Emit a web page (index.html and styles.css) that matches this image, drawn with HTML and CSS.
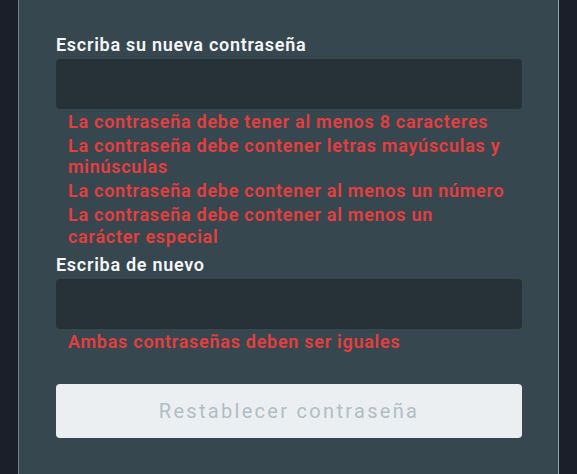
FILE: index.html
```html
<!DOCTYPE html>
<html lang="es">
<head>
<meta charset="utf-8">
<title>Restablecer contraseña</title>
<link rel="stylesheet" href="styles.css">
</head>
<body>
<div class="page">
  <form class="card">
    <div class="field">
      <label class="label" for="pw1">Escriba su nueva contraseña</label>
      <input class="input" id="pw1" type="password">
      <ul class="errors">
        <li>La contraseña debe tener al menos 8 caracteres</li>
        <li>La contraseña debe contener letras mayúsculas y minúsculas</li>
        <li>La contraseña debe contener al menos un número</li>
        <li>La contraseña debe contener al menos un carácter especial</li>
      </ul>
    </div>
    <div class="field second">
      <label class="label" for="pw2">Escriba de nuevo</label>
      <input class="input" id="pw2" type="password">
      <ul class="errors">
        <li>Ambas contraseñas deben ser iguales</li>
      </ul>
    </div>
    <button class="submit" type="button" disabled>Restablecer contraseña</button>
  </form>
</div>
</body>
</html>
```
FILE: styles.css
```css
* { box-sizing: border-box; }
html, body {
  margin: 0;
  padding: 0;
  height: 100%;
  background: #1b1f29;
  font-family: Roboto, "Liberation Sans", sans-serif;
  overflow: hidden;
}
.page {
  padding: 0 18px;
  height: 100%;
}
.card {
  background: #37474f;
  border-left: 1px solid #6d8290;
  border-right: 1px solid #8ea3b2;
  min-height: 100%;
  padding: 34px 36px 40px 37px;
  display: flex;
  flex-direction: column;
}
.field {
  display: flex;
  flex-direction: column;
}
.field.second {
  margin-top: 7.5px;
}
.label {
  color: #f5f7f8;
  font-size: 18px;
  font-weight: 600;
  letter-spacing: 0.72px;
  line-height: 21px;
  margin-bottom: 4px;
}
.input {
  height: 50px;
  width: 100%;
  background: #263238;
  border: none;
  border-radius: 4px;
  outline: none;
  color: #fff;
  font-size: 18px;
  padding: 0 12px;
}
.errors {
  list-style: none;
  margin: 2px 0 0;
  padding: 0 12px;
  display: flex;
  flex-direction: column;
  gap: 2.5px;
}
.errors li {
  color: #e53e3e;
  font-size: 18px;
  font-weight: 600;
  letter-spacing: 0.72px;
  line-height: 21.4px;
}
.submit {
  margin-top: 31.5px;
  height: 54px;
  width: 100%;
  background: #eceff1;
  border: none;
  border-radius: 4px;
  color: #b0bec5;
  font-family: Roboto, "Liberation Sans", sans-serif;
  font-size: 20px;
  letter-spacing: 2.3px;
  padding: 0;
}
```
